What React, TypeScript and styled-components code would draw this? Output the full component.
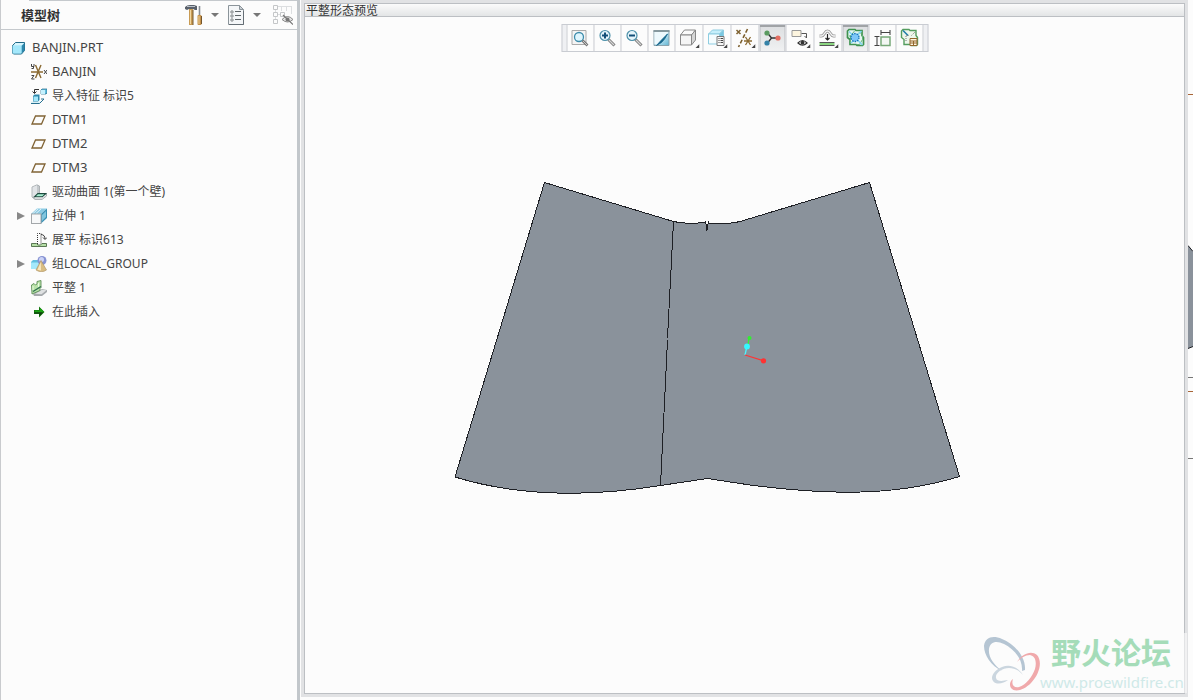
import React from "react";
import styled, { createGlobalStyle } from "styled-components";

const sans = `"Noto Sans", "Noto Sans CJK SC", sans-serif`;

const Global = createGlobalStyle`
  *, *::before, *::after { box-sizing: border-box; }
  html, body, #root { height: 100%; }
  body { margin: 0; overflow: hidden; background: #fcfcfc; color: #444; font: 12px/24px ${sans}; }
  button { font: inherit; color: inherit; padding: 0; border: 0; background: none; cursor: pointer; }
  svg { display: block; }
`;

const Workspace = styled.div`
  display: grid;
  grid-template-columns: 301px minmax(0, 1fr) 5px;
  height: 100%;
`;

/* ---------- model tree ---------- */

const TreePanel = styled.aside`
  display: flex;
  flex-direction: column;
  margin-right: 1px;
  border-left: 1px solid #c9cbce;
  border-right: 3px solid #c2c7cb;
  background: #fcfcfc;
`;

const TreeHeader = styled.header`
  display: flex;
  align-items: center;
  height: 30px;
  padding-left: 20px;
  border-bottom: 1px solid #c5c9cd;
  background: linear-gradient(#c5c9cd, #c5c9cd) 28px 0 / 100% 1px no-repeat;
`;

const TreeTitle = styled.h1`
  flex: 1;
  margin: 0;
  font: 700 13px/24px "Noto Sans CJK SC", sans-serif;
  color: #333;
`;

const HeaderButton = styled.button<{ $w: number }>`
  display: grid;
  place-items: center;
  width: ${(p) => p.$w}px;
  height: 24px;
`;

const TreeList = styled.ul`
  list-style: none;
  margin: 0;
  padding: 6px 0;
`;

const TreeRow = styled.li<{ $root?: boolean; $latin?: boolean }>`
  display: flex;
  align-items: center;
  height: 24px;
  padding-left: ${(p) => (p.$root ? 10 : 15)}px;
  font-size: ${(p) => (p.$latin ? 13 : 12)}px;
  line-height: ${(p) => (p.$latin ? 22 : 24)}px;
`;

const TreeLabel = styled.span`
  height: 24px;
`;

const Expander = styled.button`
  display: grid;
  place-items: center;
  width: 10px;
  height: 16px;
`;

const ExpanderGap = styled.span`
  width: 10px;
`;

const TreeIcon = styled.span`
  display: grid;
  width: 16px;
  margin-right: 5px;
  ${ExpanderGap} + &, ${Expander} + & { margin-left: 5px; }
`;

/* ---------- preview window ---------- */

const PreviewFrame = styled.main`
  display: flex;
  padding: 3px;
  background: #e1e2e4;
  margin-bottom: 3px;
`;

const Preview = styled.section`
  flex: 1;
  display: flex;
  flex-direction: column;
  border: 1px solid #bcbfc3;
  background: #fcfcfc;
`;

const PreviewTitle = styled.h2`
  margin: 0;
  padding-left: 1px;
  height: 13px;
  border-bottom: 1px solid #bcbfc3;
  background: linear-gradient(#fbfbfb, #e3e5e6);
  font: 400 12px/12px "Noto Sans CJK SC", sans-serif;
  color: #333;
`;

const Viewport = styled.div`
  position: relative;
  flex: 1;
  min-height: 0;
`;

const Scene = styled.svg`
  width: 100%;
  height: 100%;
`;

const Toolbar = styled.div`
  position: absolute;
  top: 7px;
  left: 50%;
  transform: translateX(-50%);
  display: flex;
  height: 28px;
  border: 1px solid #c9ccd2;
  background: #eff0f3;
  padding: 0 4px;
`;

const Tool = styled.button<{ $on?: boolean; $wide?: boolean }>`
  display: grid;
  align-items: center;
  justify-items: start;
  padding-left: 2px;
  width: ${(p) => (p.$wide ? 28 : 27)}px;
  border-left: 1px solid #c9ccd2;
  background: ${(p) => (p.$on ? "linear-gradient(#dcdee0, #f0f1f2)" : "#fcfcfc")};
  box-shadow: ${(p) => (p.$on ? "inset 0 2px #a0a3a6, inset 1px 0 #b9bcbf, inset -1px 0 #b9bcbf" : "none")};
  &:last-child { border-right: 1px solid #c9ccd2; }
`;

const Watermark = styled.div`
  position: absolute;
  right: -3px;
  bottom: 0;
  display: flex;
  width: 205px;
  height: 60px;
  background: rgba(252, 252, 252, 0.6);
`;

const WatermarkText = styled.div`
  display: flex;
  flex-direction: column;
  margin-left: -2px;
`;

const WatermarkName = styled.strong`
  padding-left: 11px;
  font: 700 30px/36px "Noto Sans CJK SC", sans-serif;
  color: #a5dcb9;
`;

const WatermarkUrl = styled.span`
  padding-top: 3px;
  font: 400 15px/20px ${sans};
  color: #cfe9e8;
`;

const NeighbourView = styled.svg`
  width: 5px;
  height: 700px;
`;

/* ---------- tree icons ---------- */

const Icon = ({ children, w = 16, h = 16 }: { children: React.ReactNode; w?: number; h?: number }) => (
  <svg width={w} height={h} viewBox={`0 0 ${w} ${h}`} fill="none" aria-hidden="true">
    {children}
  </svg>
);

const PartIcon = () => (
  <Icon>
    <path d="M1.500 5.500 4.500 2.500h9v8l-3 3.500h-8l-1-1z" fill="#8fd8ee" stroke="#216a88" />
    <path d="M10.500 6 13.500 3v7.300l-3 3.200z" fill="#2f87ab" />
    <rect x="1.500" y="5.500" width="9" height="8" rx="1" fill="#a4e8fb" />
    <path d="M4.500 3h8.500L10.500 5.500H2.500z" fill="#d8f6fe" />
  </Icon>
);

const CsysIcon = () => (
  <Icon>
    <path d="M0 8h12M4.500 1l5.500 13M10 1 4.500 14" stroke="#8a6a32" strokeWidth="1.400" />
    <path d="M.5 0v2.500h2.500V0M2.500 2.500v2H.5M.5 11.500h2.500L.5 15h3M13 6l3 4M16 6l-3 4" stroke="#444" />
  </Icon>
);

const ImportIcon = () => (
  <Icon>
    <path d="M10 2l1-1h5v4l-1 1h-5z" fill="#62bfe0" stroke="#1f6786" strokeWidth=".7" />
    <path d="M10 2h4v4h-4z" fill="#c5f1fd" />
    <path d="M8 1.500H3.500V5M1.500 3.500l2 2 2-2" stroke="#333" />
    <path d="M0 13.500h11L8 16H.5z" fill="#d8f1f7" />
    <path d="M0 15.500h8.500l4.500-4.500h-3" stroke="#276f8f" />
    <path d="M2 8l1.500-1.500H8.500V12L7 13.500H2z" fill="#2f87ab" />
    <path d="M2.500 8.500h4.500v4.500H2.500z" fill="#a4e8fb" />
  </Icon>
);

const DatumIcon = () => (
  <Icon>
    <path d="M1 12 4.500 4h9.500L10.500 12z" stroke="#806334" strokeWidth="1.300" />
  </Icon>
);

const WallIcon = () => (
  <Icon>
    <path d="M1 13V3L6 .8 8.500 2v8H15.500v2L11 15.500H4z" fill="#c3c8cb" stroke="#969da1" strokeWidth=".7" />
    <path d="M1.500 3.200 6 1.200V10l-4.500 3z" fill="#e1e4e7" />
    <path d="M3.500 12.800 6.800 9.600h8L11.300 12.800z" fill="#a7efd2" stroke="#1e4a3f" strokeWidth="1.100" />
    <path d="M4 14h7.500L15 11" stroke="#eceeef" />
  </Icon>
);

const ExtrudeIcon = () => (
  <Icon>
    <path d="M0 6 6 .5h10L10 6z" fill="#8ccbe4" />
    <path d="M2 5.500 7 1M5 5.500 10 1" stroke="#e0f1f8" />
    <path d="M10 6 16 .5V10l-6 5.500z" fill="#3a91b5" />
    <path d="M11 13V7l4-4v6z" fill="#81c5de" />
    <rect x=".5" y="6" width="9.500" height="9.500" fill="#f7f8f9" stroke="#a3a7aa" />
  </Icon>
);

const UnbendIcon = () => (
  <Icon>
    <path d="M6.500 12V1.500h3.500V12" stroke="#333" strokeDasharray="1 1" />
    <path d="M.5 14.500v-3h5l1.500 1.500h2.500l1.500-1.500h4.500v3z" fill="#b5dea6" stroke="#4d6b45" strokeWidth=".9" />
    <path d="M10 2.500q4 .2 4 4.500M12 5.500l2 2 2-2" stroke="#3d3d3d" />
  </Icon>
);

const GroupIcon = () => (
  <Icon>
    <path d="M0 6l2-2h8v8l-1 1H0z" fill="#63bfdf" />
    <path d="M0 6.500h8V13H0z" fill="#a4e8fb" />
    <circle cx="11" cy="4.500" r="4.500" fill="#8793d3" />
    <circle cx="10.500" cy="3.500" r="2.500" fill="#ccd3f5" />
    <path d="M10 4.500 15.500 14q-5 3.500-10.500 0z" fill="#d9bd82" stroke="#a98d5c" strokeWidth=".6" />
    <path d="M9.800 6 10 14.500l-3.500-.8z" fill="#f8e7bf" />
  </Icon>
);

const FlattenIcon = () => (
  <Icon>
    <path d="M2 14l9-5 5 1v2l-5 4H3z" fill="#a5a9ac" />
    <path d="M4 13.800l7-4 4.500.5-5 4z" fill="#dfe1e2" />
    <path d="M.5 5 3 3.500 4.500 5 6 4V1.500L10 .5v7l-1 1v2L1 14z" fill="#b9e3a9" stroke="#5d8d58" strokeWidth=".9" />
    <path d="M2 11.500 10 6.500" stroke="#2e6f4f" strokeWidth="1.400" />
    <path d="M2 6v4M7.500 3v4" stroke="#eafbe0" />
  </Icon>
);

const InsertIcon = () => (
  <Icon>
    <path d="M3 6h5V2.500L13.500 8 8 13.500V10H3z" fill="#12770c" />
    <path d="M4 6.500h5V4l4 4H4z" fill="#1ba314" />
    <path d="M3 8.500h9L8.500 12V9.500H3z" fill="#133b10" />
  </Icon>
);

/* ---------- header icons ---------- */

const SettingsIcon = () => (
  <Icon w={18} h={22}>
    <path d="M0 5V3q2-2 5-2h4l3 1v4h-2l-2-1H4L2 6z" fill="#59606a" />
    <path d="M2 2.500h8" stroke="#b9c0c8" />
    <path d="M4 5h4v16H4z" fill="#c89b54" />
    <path d="M5 6h1v14H5z" fill="#f1d7a0" />
    <path d="M14.500 2v9" stroke="#858c94" strokeWidth="1.600" />
    <rect x="12.500" y="11" width="4" height="10" rx="1" fill="#c49149" />
    <path d="M14 12v8" stroke="#efd29b" />
    <path d="M8 6v15M16.500 12v8" stroke="#73562e" />
  </Icon>
);

const ShowIcon = () => (
  <Icon w={16} h={20}>
    <path d="M.5.5h11l4 4v15H.5z" fill="#f4f6f8" stroke="#8b949a" />
    <path d="M11.500.5v4h4z" fill="#cad0d5" stroke="#8b949a" />
    <path d="M1 19.500h14.500V6" stroke="#656e75" />
    {[7, 11, 15].map((y) => (
      <g key={y} stroke="#5d6468">
        <circle cx="4" cy={y} r="1.200" fill="#fff" strokeWidth=".8" />
        <path d={`M7 ${y - 0.5}h6`} />
      </g>
    ))}
  </Icon>
);

const TreeFilterIcon = () => (
  <Icon w={20} h={20}>
    <g stroke="#c4c6c8">
      <path d="M.5.5h4v4h-4zM.5 7.500h4v4h-4zM.5 14.500h4v4h-4zM7.500 7.500h4v4h-4z" />
      <path d="M5 1.500h14M8.500 1v5M13.500 1v5M18.500 1v8M5 9.500h2M2.500 5v2M2.500 12v2" stroke="#dcdee0" />
    </g>
    <path d="M9 14.500q5.500-6 11 0q-5.500 5-11 0z" fill="#e3e3e3" stroke="#8b8b8b" />
    <circle cx="14.500" cy="14.500" r="2" fill="#777" />
    <path d="M10 10 20 19.500" stroke="#777" strokeWidth="1.200" />
  </Icon>
);

const CaretDown = () => (
  <Icon w={8} h={4}>
    <path d="M0 0h8L4 4z" fill="#777" />
  </Icon>
);

/* ---------- viewport toolbar icons ---------- */

const Corner = () => <path d="M22 17v4h-4z" fill="#444" />;

const ToolIcon = ({ children, menu }: { children: React.ReactNode; menu?: boolean }) => (
  <Icon w={22} h={22}>
    {children}
    {menu && <Corner />}
  </Icon>
);

const Lens = ({ sign }: { sign?: "plus" | "minus" }) => (
  <>
    <path d="M12 12.500l6 6" stroke="#777" strokeWidth="3" />
    <path d="M12.500 13 17.500 18" stroke="#d5d5d5" strokeWidth="1.300" />
    <circle cx="8.500" cy="8.500" r="5" fill="#e5f5fb" stroke="#4d91aa" strokeWidth="1.200" />
    {sign && <path d="M5.500 8.500h6" stroke="#124f78" strokeWidth="2" />}
    {sign === "plus" && <path d="M8.500 5.500v6" stroke="#124f78" strokeWidth="2" />}
  </>
);

const RefitIcon = () => (
  <ToolIcon>
    <path d="M2.500 3.500h14v14h-14z" fill="#f4f4f4" stroke="#aaa" />
    <circle cx="9.500" cy="10" r="4.500" fill="#dff5fd" stroke="#3d8cab" strokeWidth="1.300" />
    <path d="M13 13.500l5 5" stroke="#777" strokeWidth="2.600" />
    <path d="M13.500 14l4 4" stroke="#ccc" />
  </ToolIcon>
);

const RepaintIcon = () => (
  <ToolIcon>
    <defs>
      <linearGradient id="paint" x1="0" x2="1" y1="0" y2="1">
        <stop stopColor="#f5fcff" />
        <stop offset=".4" stopColor="#d5eff8" />
        <stop offset="1" stopColor="#5fb4d2" />
      </linearGradient>
    </defs>
    <path d="M3.500 3.500h15v15h-15z" fill="url(#paint)" stroke="#8aa3ad" />
    <path d="M3 4h16" stroke="#87999f" strokeWidth="2" />
    <path d="M4 5h14L7 17H4z" fill="#eef9fd" />
    <path d="M17 7Q14 13 11 15.500L6 18.500 11 13z" fill="#17668b" stroke="#17668b" strokeWidth=".8" />
  </ToolIcon>
);

const DisplayStyleIcon = () => (
  <ToolIcon menu>
    <path d="M3 8l4-5h11l-4 5z" fill="#fafafa" stroke="#888" />
    <path d="M14 8l4-5v10l-4 5z" fill="#d6d6d6" stroke="#888" />
    <path d="M3 8h11v10H3z" fill="#f5f5f5" stroke="#888" />
  </ToolIcon>
);

const SavedViewsIcon = () => (
  <ToolIcon menu>
    <path d="M3 7l4-4h11l-4 4z" fill="#c5effb" stroke="#8ecde1" />
    <path d="M14 7l4-4v10l-4 4z" fill="#79c8e2" stroke="#8ecde1" />
    <path d="M3 7h11v10H3z" fill="#f4fcfe" stroke="#8ecde1" />
    <path d="M11.500 9.500h7v9h-7z" fill="#f7f7f7" stroke="#777" />
    <path d="M13 11.500h1m1 0h2.500M13 13.500h1m1 0h2.500M13 15.500h1m1 0h2.500" stroke="#444" />
  </ToolIcon>
);

const DatumDisplayIcon = () => (
  <ToolIcon menu>
    <path d="M3 3l4 4M7 3 3 7" stroke="#7d6130" strokeWidth="1.500" />
    <path d="M14 2 5 20" stroke="#7d6130" strokeWidth="1.600" strokeDasharray="4 2" />
    <path d="M10.500 14h8M12 10l5 8M17 10l-5 8" stroke="#8a6a32" strokeWidth="1.300" />
  </ToolIcon>
);

const SpinCenterIcon = () => (
  <ToolIcon>
    <path d="M6 6l4 5h7M10 11 6 16" stroke="#333" strokeWidth="1.300" />
    <circle cx="5.500" cy="6" r="2.600" fill="#5a9a60" />
    <circle cx="16.500" cy="11" r="2.600" fill="#e36d61" />
    <circle cx="5.500" cy="16" r="2.600" fill="#3582a7" />
  </ToolIcon>
);

const AnnotationIcon = () => (
  <ToolIcon menu>
    <path d="M3.500 3.500h9v6h-9z" fill="#fdf5df" stroke="#999" />
    <path d="M13 6.500h5V11M16 9l2 2" stroke="#555" />
    <path d="M9.500 16q4.500-5 9 0q-4.500 4.500-9 0z" fill="#fff" stroke="#333" strokeWidth="1.200" />
    <circle cx="14" cy="15.800" r="2" fill="#333" />
  </ToolIcon>
);

const BendIcon = () => (
  <ToolIcon menu>
    <path d="M3 9h2c3 0 3-5 6-5s3 5 6 5h2" stroke="#999" strokeWidth="3" />
    <path d="M3 9h2c3 0 3-5 6-5s3 5 6 5h2" stroke="#f3f3f3" strokeWidth="1.400" />
    <path d="M11 7v6M9 11l2 2 2-2" stroke="#222" strokeWidth="1.200" />
    <path d="M3 15.500h15M3 18.500h15" stroke="#555" />
    <path d="M3 17h15" stroke="#8bd581" strokeWidth="2" />
  </ToolIcon>
);

const patch = "M4.500 2.500h6l1 1h6v5l1.500 2v7l-1 1h-5.500l-1-1h-6v-5l-2.500-2V4z";

const FlatPreviewIcon = () => (
  <ToolIcon>
    <path d={patch} fill="#e4f6f2" stroke="#3f9350" strokeWidth="1.700" />
    <path d="M6 16.500V9l4-5M12 17.500h3l3-5V8M4.500 9h3M14 6h3" stroke="#67b37a" />
    <path d="M4.500 4.500l4 4M13.500 13.500l4.500 4.500M6.500 16l3-3M13 8l4-4" stroke="#7fd4f2" strokeWidth="1.400" />
    <circle cx="10.500" cy="10.500" r="4" fill="#7cc6f8" stroke="#1674b8" strokeWidth="1.300" strokeDasharray="1.500 1" />
  </ToolIcon>
);

const DimensionIcon = () => (
  <ToolIcon>
    <path d="M9.500 3v5M18.500 3v5M9.500 5.500h9M3 9.500h5M3 18.500h5M5.500 9.500v9" stroke="#444" strokeWidth="1.100" />
    <path d="M9.500 10h9v8.500h-9z" fill="#f3f7f3" stroke="#77a878" strokeWidth="1.500" />
  </ToolIcon>
);

const FlatTableIcon = () => (
  <ToolIcon>
    <path d={patch} fill="#eef7ec" stroke="#549d5f" strokeWidth="1.400" />
    <path d="M4.500 3.500l5 5" stroke="#1f7da8" strokeWidth="1.600" />
    <path d="M7.500 14V8.500h3M13 8.500l3.500-3.500" stroke="#777" strokeDasharray="1 1" />
    <path d="M11.500 11.500h7v7h-7z" fill="#fff6df" stroke="#92672d" />
    <path d="M11.500 14h7M11.500 16h7M15 14v4.500" stroke="#92672d" />
  </ToolIcon>
);

type TreeItem = { label: string; icon: React.ReactNode; root?: boolean; latin?: boolean; open?: boolean };

const items: TreeItem[] = [
  { label: "BANJIN.PRT", icon: <PartIcon />, root: true, latin: true },
  { label: "BANJIN", icon: <CsysIcon />, latin: true },
  { label: "导入特征 标识5", icon: <ImportIcon /> },
  { label: "DTM1", icon: <DatumIcon />, latin: true },
  { label: "DTM2", icon: <DatumIcon />, latin: true },
  { label: "DTM3", icon: <DatumIcon />, latin: true },
  { label: "驱动曲面 1(第一个壁)", icon: <WallIcon /> },
  { label: "拉伸 1", icon: <ExtrudeIcon />, open: false },
  { label: "展平 标识613", icon: <UnbendIcon /> },
  { label: "组LOCAL_GROUP", icon: <GroupIcon />, open: false },
  { label: "平整 1", icon: <FlattenIcon /> },
  { label: "在此插入", icon: <InsertIcon /> },
];

const tools: { label: string; icon: React.ReactNode; on?: boolean; wide?: boolean }[] = [
  { label: "重新调整", icon: <RefitIcon /> },
  { label: "放大", icon: <ToolIcon><Lens sign="plus" /></ToolIcon> },
  { label: "缩小", icon: <ToolIcon><Lens sign="minus" /></ToolIcon> },
  { label: "重画", icon: <RepaintIcon /> },
  { label: "显示样式", icon: <DisplayStyleIcon />, wide: true },
  { label: "已保存方向", icon: <SavedViewsIcon />, wide: true },
  { label: "基准显示", icon: <DatumDisplayIcon />, wide: true },
  { label: "旋转中心", icon: <SpinCenterIcon />, on: true },
  { label: "注释显示", icon: <AnnotationIcon />, wide: true },
  { label: "折弯", icon: <BendIcon />, wide: true },
  { label: "平整形态", icon: <FlatPreviewIcon />, on: true },
  { label: "尺寸", icon: <DimensionIcon /> },
  { label: "表", icon: <FlatTableIcon />, wide: true },
];

const FlatPattern = () => (
  <Scene viewBox="305 17 879 676" role="img" aria-label="平整形态">
    <g stroke="#1d1f24" fill="none" shapeRendering="crispEdges">
      <path
        d="M544.500 182.500 673.500 221.500Q684 224 698 223L705 222.500 706.500 225H707.500L708.500 223Q728 224.500 740 221.500L869.500 182.500 959.500 476.500C890 498 820 494 750 485L707.500 478.500 660.500 485.500C590 497 520 497 455 477Z"
        fill="#8a929b"
      />
      <path d="M673.500 221.500 667.500 338M667.500 340 660.500 485.500" />
      <path d="M705.500 221v3M708.500 221v3M706.500 224v7M707.500 224v6" />
    </g>
    <path d="M706.500 219h1v4h-1z" fill="#fcfcfc" />
    <path d="M745 355 747 346" stroke="#4cf4ff" strokeWidth="1.300" />
    <path d="M748 345 749 338" stroke="#38ed38" strokeWidth="1.300" />
    <path d="M745 355 764 361" stroke="#ff3434" strokeWidth="1.300" />
    <circle cx="749.500" cy="338" r="2" fill="#30ef30" />
    <circle cx="747" cy="346.500" r="2.900" fill="#35f8ff" />
    <circle cx="763.500" cy="360.800" r="2.600" fill="#ff3232" />
  </Scene>
);

const WatermarkLogo = () => (
  <svg width="60" height="60" viewBox="0 0 60 60" aria-hidden="true">
    <path d="M20 38C9 33 2 22 2 13C3 4 11 2 20 6C32 11 44 23 43 37L40 38C41 26 32 16 22 11C14 7 8 9 7 16C6 24 12 32 20 38Z" fill="#b5c5d3" />
    <path d="M35 29C40 21 49 17 55 22C61 29 57 42 49 50C42 57 33 60 29 55C27 52 28 48 31 46C29 52 32 55 37 54C44 52 50 44 53 36C55 28 53 23 48 22C43 22 39 25 35 29Z" fill="#f0a9ab" />
    <path d="M41 42C36 34 28 31 20 34C12 37 8 44 11 48C14 52 21 51 26 47C21 48 15 49 14 45C13 40 20 35 27 35C33 35 38 38 41 42Z" fill="#cbd6df" />
  </svg>
);

export default function App() {
  return (
    <>
      <Global />
      <Workspace>
        <TreePanel>
          <TreeHeader>
            <TreeTitle>模型树</TreeTitle>
            <HeaderButton $w={18} aria-label="设置"><SettingsIcon /></HeaderButton>
            <HeaderButton $w={24} aria-label="设置菜单"><CaretDown /></HeaderButton>
            <HeaderButton $w={18} aria-label="显示"><ShowIcon /></HeaderButton>
            <HeaderButton $w={24} aria-label="显示菜单"><CaretDown /></HeaderButton>
            <HeaderButton $w={28} aria-label="树过滤器"><TreeFilterIcon /></HeaderButton>
          </TreeHeader>
          <TreeList>
            {items.map((item) => (
              <TreeRow key={item.label} $root={item.root} $latin={item.latin}>
                {!item.root &&
                  (item.open === false ? (
                    <Expander aria-label="展开">
                      <Icon w={8} h={10}><path d="M0 1v8l8-4z" fill="#888" /></Icon>
                    </Expander>
                  ) : (
                    <ExpanderGap />
                  ))}
                <TreeIcon>{item.icon}</TreeIcon>
                <TreeLabel>{item.label}</TreeLabel>
              </TreeRow>
            ))}
          </TreeList>
        </TreePanel>
        <PreviewFrame>
          <Preview>
            <PreviewTitle>平整形态预览</PreviewTitle>
            <Viewport>
              <FlatPattern />
              <Toolbar role="toolbar">
                {tools.map((t) => (
                  <Tool key={t.label} aria-label={t.label} aria-pressed={t.on} $on={t.on} $wide={t.wide}>
                    {t.icon}
                  </Tool>
                ))}
              </Toolbar>
              <Watermark>
                <WatermarkLogo />
                <WatermarkText>
                  <WatermarkName>野火论坛</WatermarkName>
                  <WatermarkUrl>www.proewildfire.cn</WatermarkUrl>
                </WatermarkText>
              </Watermark>
            </Viewport>
          </Preview>
        </PreviewFrame>
        <NeighbourView viewBox="0 0 5 700" aria-hidden="true">
          <path d="M0 245.500 5 251.500V346.500L0 348.500" fill="#8a929b" />
          <path d="M0 245.500 5 251.500M5 346.500 0 348.500" stroke="#1d1f24" />
          <path d="M0 94.500h5M0 391.500h5" stroke="#a86537" />
          <path d="M0 377.500h5M0 458.500h5" stroke="#777" />
        </NeighbourView>
      </Workspace>
    </>
  );
}
